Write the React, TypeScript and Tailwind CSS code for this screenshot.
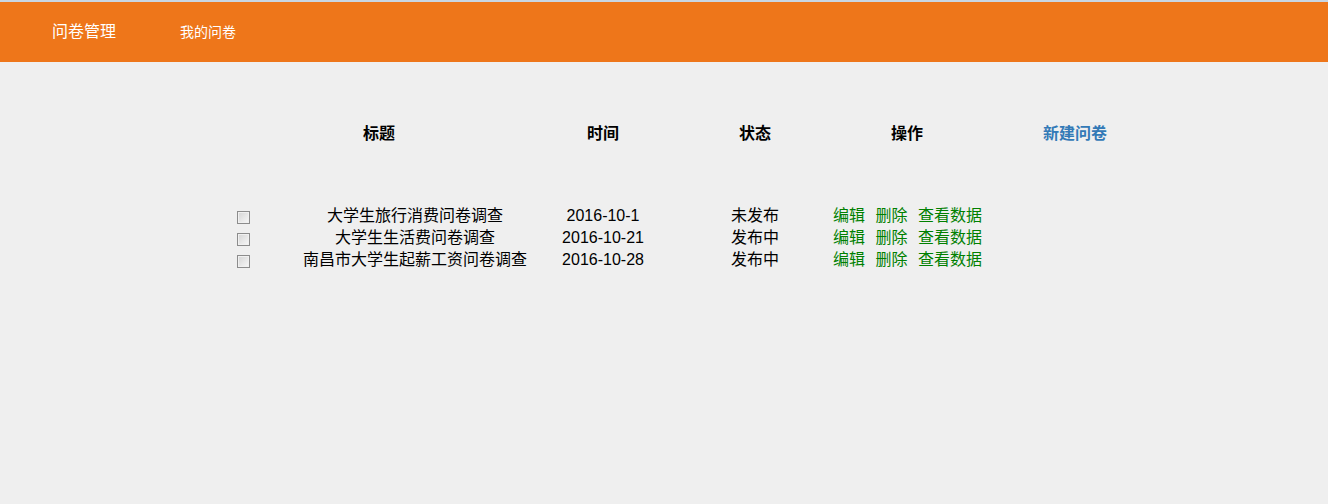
import React from "react";

const rows = [
  { title: "大学生旅行消费问卷调查", date: "2016-10-1", status: "未发布" },
  { title: "大学生生活费问卷调查", date: "2016-10-21", status: "发布中" },
  { title: "南昌市大学生起薪工资问卷调查", date: "2016-10-28", status: "发布中" },
];

export default function App() {
  return (
    <div className="min-h-[504px] w-full bg-[#efefef] font-['Liberation_Sans','Noto_Sans_CJK_SC',sans-serif] text-black">
      <div className="h-[2px] bg-[#c9d6e3]"></div>
      {/* nav */}
      <nav className="flex h-[60px] items-center bg-[#ee761a] text-white">
        <a className="ml-[52px] w-[64px] text-[16px]">问卷管理</a>
        <a className="ml-[64px] text-[14px]">我的问卷</a>
      </nav>

      {/* table head */}
      <div className="mt-[61px] flex pl-[267px] text-[16px] font-bold leading-[22px]">
        <div className="w-[224px] text-center">标题</div>
        <div className="w-[224px] text-center">时间</div>
        <div className="w-[80px] text-center">状态</div>
        <div className="w-[224px] text-center">操作</div>
        <div className="w-[112px] text-center text-[#337ab7]">新建问卷</div>
      </div>

      {/* table body */}
      <div className="mt-[60px] flex flex-col text-[16px] leading-[22px]">
        {rows.map((r) => (
          <div key={r.title} className="flex pl-[230px]">
            <div className="flex w-[26px] items-center justify-center pt-[2px]">
              <input
                type="checkbox"
                className="h-[13px] w-[13px] appearance-none border border-[#8c8c8c] bg-gradient-to-br from-[#d4d4d4] to-[#f8f8f8] shadow-[inset_0_0_0_1px_#f0f0f0]"
              />
            </div>
            <div className="flex w-[318px] justify-center whitespace-nowrap">{r.title}</div>
            <div className="flex w-[58px] justify-center whitespace-nowrap">{r.date}</div>
            <div className="ml-[83px] flex w-[80px] justify-center whitespace-nowrap">{r.status}</div>
            <div className="ml-[38px] flex gap-[10.5px] whitespace-nowrap text-[#008000]">
              <a>编辑</a>
              <a>删除</a>
              <a>查看数据</a>
            </div>
          </div>
        ))}
      </div>
    </div>
  );
}
